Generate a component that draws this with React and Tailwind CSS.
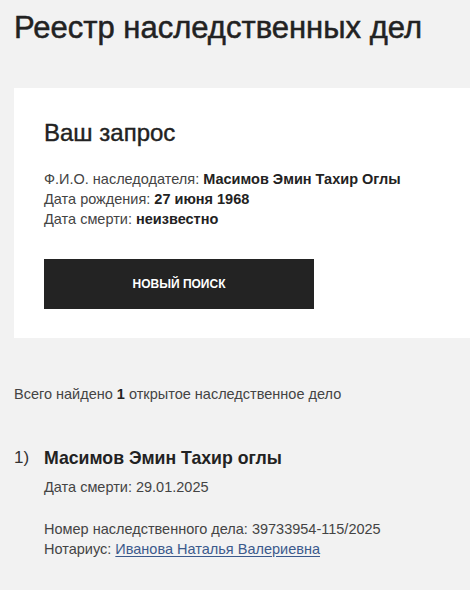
export default function App() {
  return (
    <div className="min-h-[590px] bg-[#f2f2f2] text-[#222] font-['Liberation_Sans',Arial,sans-serif] overflow-hidden">
      <h1 className="px-[14px] pt-[10px] text-[31px] leading-[36px] font-normal text-[#222] [-webkit-text-stroke:0.5px_#222]">
        Реестр наследственных дел
      </h1>

      <div className="ml-[14px] mt-[42px] bg-white pl-[30px] pt-[31px] pb-[29px]">
        <h2 className="text-[24px] leading-[28px] text-[#222] [-webkit-text-stroke:0.4px_#222]">Ваш запрос</h2>
        <div className="mt-[22px] text-[14.5px] leading-[20px] text-[#444]">
          <p>
            Ф.И.О. наследодателя: <b className="text-[#222]">Масимов Эмин Тахир Оглы</b>
          </p>
          <p>
            Дата рождения: <b className="text-[#222]">27 июня 1968</b>
          </p>
          <p>
            Дата смерти: <b className="text-[#222]">неизвестно</b>
          </p>
        </div>
        <button className="mt-[30px] w-[270px] h-[50px] bg-[#232323] text-white text-[12px] font-bold uppercase">
          Новый поиск
        </button>
      </div>

      <p className="px-[14px] mt-[46px] text-[14.5px] leading-[20px] text-[#444]">
        Всего найдено <b className="text-[#222]">1</b> открытое наследственное дело
      </p>

      <div className="flex px-[14px] mt-[42px]">
        <span className="w-[30px] text-[17px] leading-[24px] text-[#333]">1)</span>
        <div>
          <p className="text-[17.7px] leading-[24px] font-bold text-[#222]">Масимов Эмин Тахир оглы</p>
          <p className="mt-[7px] text-[14.5px] leading-[20px] text-[#444]">Дата смерти: 29.01.2025</p>
          <div className="mt-[22px] text-[14.5px] leading-[20px] text-[#444]">
            <p>Номер наследственного дела: 39733954-115/2025</p>
            <p>
              Нотариус:{" "}
              <a href="#" className="text-[#3c5a8c] underline underline-offset-2">
                Иванова Наталья Валериевна
              </a>
            </p>
          </div>
        </div>
      </div>
    </div>
  );
}
